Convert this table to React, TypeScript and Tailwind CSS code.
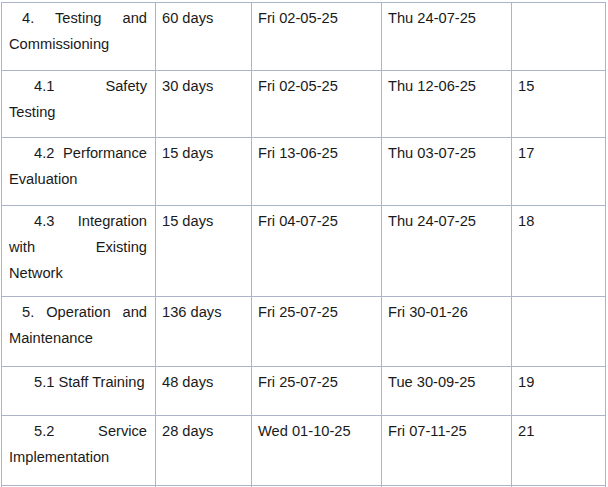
const ROWS = [
  { task: '4. Testing and Commissioning', sub: false, dur: '60 days', start: 'Fri 02-05-25', end: 'Thu 24-07-25', pred: '', h: 'h-[67px]' },
  { task: '4.1 Safety Testing', sub: true, dur: '30 days', start: 'Fri 02-05-25', end: 'Thu 12-06-25', pred: '15', h: 'h-[66px]' },
  { task: '4.2 Performance Evaluation', sub: true, dur: '15 days', start: 'Fri 13-06-25', end: 'Thu 03-07-25', pred: '17', h: 'h-[67px]' },
  { task: '4.3 Integration with Existing Network', sub: true, dur: '15 days', start: 'Fri 04-07-25', end: 'Thu 24-07-25', pred: '18', h: 'h-[90px]' },
  { task: '5. Operation and Maintenance', sub: false, dur: '136 days', start: 'Fri 25-07-25', end: 'Fri 30-01-26', pred: '', h: 'h-[69px]' },
  { task: '5.1 Staff Training', sub: true, dur: '48 days', start: 'Fri 25-07-25', end: 'Tue 30-09-25', pred: '19', h: 'h-[48px]' },
  { task: '5.2 Service Implementation', sub: true, dur: '28 days', start: 'Wed 01-10-25', end: 'Fri 07-11-25', pred: '21', h: 'h-[69px]' },
]

const cell = 'bg-white pl-[6px] pr-[6px] pt-[2px]'

export default function App() {
  return (
    <div className="min-h-screen bg-white font-['Liberation_Sans',Arial,sans-serif] text-[14.67px] leading-[26px] text-[#1a1a1a]">
      <div className="ml-px mt-[2px] grid w-[605px] grid-cols-[153px_95px_129px_129px_93px] gap-px bg-[#aab5c8] p-px">
        {ROWS.map((r) => (
          <div key={r.task} className="contents">
            <div className={`${r.h} bg-white pl-[7px] pr-[8px] pt-[2px]`}>
              <p className={`text-justify ${r.sub ? 'indent-[25px]' : 'indent-[13px]'}`}>{r.task}</p>
            </div>
            <div className={`${r.h} ${cell}`}>{r.dur}</div>
            <div className={`${r.h} ${cell}`}>{r.start}</div>
            <div className={`${r.h} ${cell}`}>{r.end}</div>
            <div className={`${r.h} ${cell}`}>{r.pred}</div>
          </div>
        ))}
        {/* next row, cut off by the window */}
        <div className="h-[40px] bg-white" />
        <div className="h-[40px] bg-white" />
        <div className="h-[40px] bg-white" />
        <div className="h-[40px] bg-white" />
        <div className="h-[40px] bg-white" />
      </div>
    </div>
  )
}
